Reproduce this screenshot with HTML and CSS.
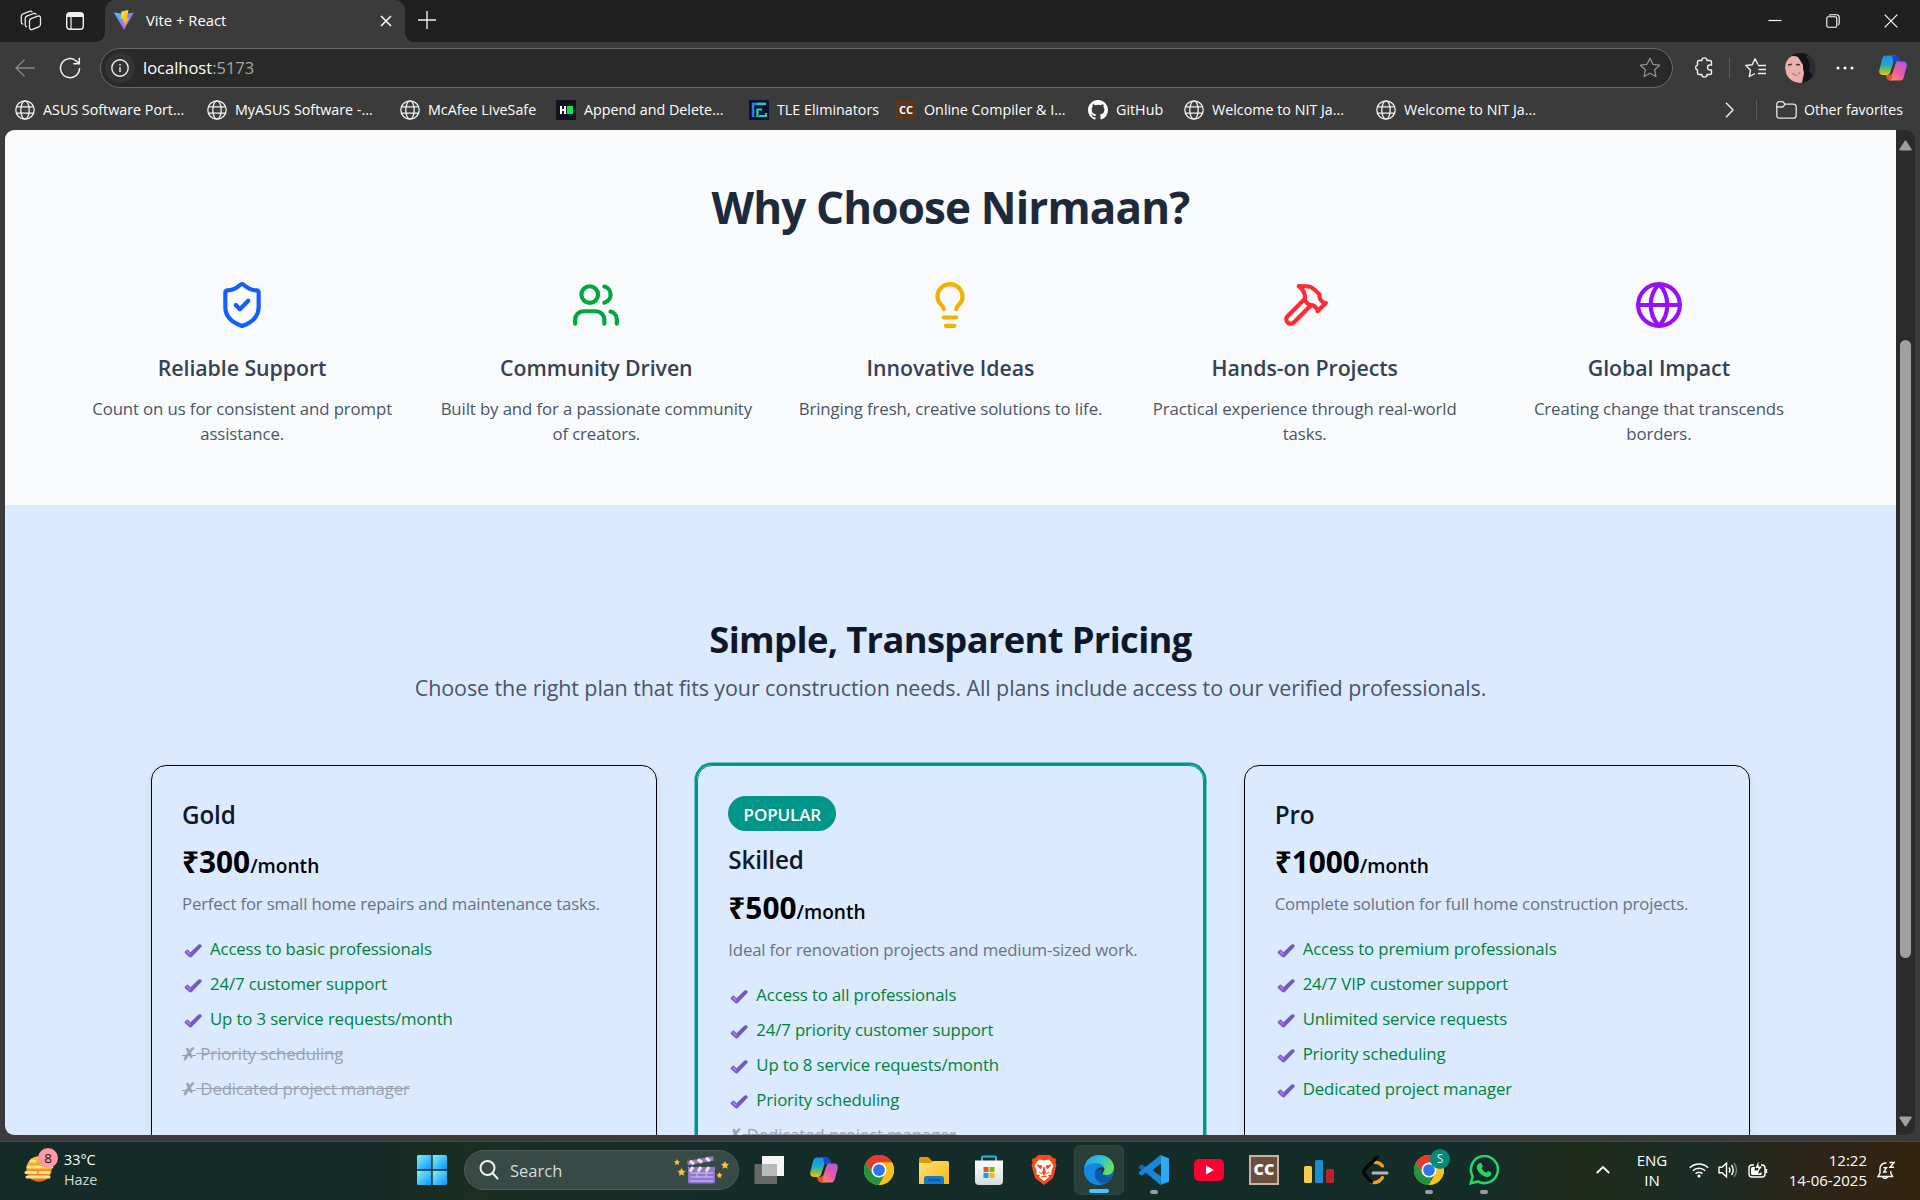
FILE: index.html
```html
<!DOCTYPE html>
<html lang="en">
<head>
<meta charset="utf-8">
<title>Vite + React</title>
<link rel="stylesheet" href="styles.css">
</head>
<body>
<svg class="defs" width="0" height="0" aria-hidden="true">
  <defs>
    <linearGradient id="gVite" x1="0" y1="0" x2="1" y2="1"><stop offset="0" stop-color="#41d1ff"/><stop offset="1" stop-color="#bd34fe"/></linearGradient>
    <linearGradient id="gBolt" x1="0" y1="0" x2="0" y2="1"><stop offset="0" stop-color="#ffdd35"/><stop offset="1" stop-color="#ffa800"/></linearGradient>
    <linearGradient id="gCoA" x1="0" y1="0" x2="0" y2="1"><stop offset="0" stop-color="#1b8ff0"/><stop offset=".45" stop-color="#22a8c8"/><stop offset=".75" stop-color="#7cc04a"/><stop offset="1" stop-color="#f4c01c"/></linearGradient>
    <linearGradient id="gCoB" x1="1" y1="0" x2="0" y2="1"><stop offset="0" stop-color="#a259f2"/><stop offset=".5" stop-color="#ee5a9a"/><stop offset="1" stop-color="#ffa04a"/></linearGradient>
    <linearGradient id="gWin" x1="0" y1="0" x2="1" y2="1"><stop offset="0" stop-color="#7df3ff"/><stop offset="1" stop-color="#0a93f5"/></linearGradient>
    <linearGradient id="gFold" x1="0" y1="0" x2="1" y2="1"><stop offset="0" stop-color="#ffe07a"/><stop offset="1" stop-color="#f8b912"/></linearGradient>
    <linearGradient id="gEdge" x1="0" y1="0" x2="1" y2=".4"><stop offset="0" stop-color="#1f9de0"/><stop offset=".55" stop-color="#2fc0d4"/><stop offset="1" stop-color="#66e05a"/></linearGradient>
    <linearGradient id="gSun" x1="0" y1="0" x2="0" y2="1"><stop offset="0" stop-color="#fccb1a"/><stop offset="1" stop-color="#e9650c"/></linearGradient>
    <linearGradient id="gTick" x1="0" y1="0" x2="0" y2="1"><stop offset="0" stop-color="#6460a8"/><stop offset="1" stop-color="#8a4fdc"/></linearGradient>
    <linearGradient id="gStore" x1="0" y1="0" x2="0" y2="1"><stop offset="0" stop-color="#fdfdfd"/><stop offset="1" stop-color="#d9dadd"/></linearGradient>
    <symbol id="world" viewBox="0 0 20 20"><g fill="none" stroke="#f2f2f2" stroke-width="1.3"><circle cx="10" cy="10" r="9.2"/><ellipse cx="10" cy="10" rx="4.2" ry="9.2"/><path d="M1.6 6.8h16.8M1.6 13.2h16.8"/></g></symbol>
    <symbol id="copilot" viewBox="0 0 30 30">
      <path d="M8 2.500h9.500c2 0 3 1.300 3.500 3l.9 3h-4c-1.800 0-2.700 1-3.200 2.800l-2.600 8.200C11.500 21.200 10.500 22 8.500 22H5C2 22 .6 20 1.400 16.800L4 6.500C4.700 3.800 5.700 2.500 8 2.500z" fill="url(#gCoA)"/>
      <path d="M14 2.500h3.500c2 0 3 1.300 3.500 3l.9 3h-4.400L15.500 10z" fill="#1646cc"/>
      <path d="M22 27.500H12.500c-2 0-3-1.300-3.500-3L8.100 22h3.400c1.800 0 2.700-1 3.200-2.800l2.700-8C18.100 9 19 8.500 21 8.500h4c3 0 4.400 2 3.600 5.200L26 23.500c-.6 2.700-1.700 4-4 4z" fill="url(#gCoB)"/>
      <path d="M8.100 22h3.400c1.500 0 2.500-.8 3-2l-1 7.500h-1c-2 0-3-1.300-3.500-3z" fill="#ee4a2c"/>
    </symbol>
    <symbol id="chrome" viewBox="0 0 48 48">
      <circle cx="24" cy="24" r="24" fill="#fbc11a"/>
      <path d="M24 12h20.800A24 24 0 0 0 3.200 12L13.600 30z" fill="#e23a2e"/>
      <path d="M3.200 12A24 24 0 0 0 24 48l10.400-18-10.400 4-10.400-4z" fill="#229342"/>
      <path d="M24 48A24 24 0 0 0 44.800 12H24l10.400 18z" fill="#fbc11a"/>
      <circle cx="24" cy="24" r="12" fill="#fff"/><circle cx="24" cy="24" r="9.400" fill="#2a78ea"/>
    </symbol>
    <symbol id="tick" viewBox="0 0 18 16"><path d="M.9 8.600 2.600 6.900Q3.500 6.300 4.300 7L6.500 9.300 14.300 1.700Q15.200.9 16.300 1.300L17.600 2.300Q18 3.200 17.300 4L8 13.800Q6.500 15.200 5 13.700L1.100 10.300Q.3 9.400.9 8.600z" fill="url(#gTick)"/><path d="M2.700 8.300 6.300 11.600" stroke="#a48be8" stroke-width="1.500"/></symbol>
  </defs>
</svg>

<header class="tabstrip">
  <svg class="workspaces" width="22" height="22" viewBox="0 0 22 22" fill="none" stroke="#e8e8e8" stroke-width="1.300" stroke-linejoin="round" stroke-linecap="round"><path d="M9.500 10.800q.2-1.600 1.600-2.200l6.600-2.500q2.500-.7 2.800 1.700v6.500q-.1 1.800-1.700 2.500l-6.300 2.600q-2.600.8-3-1.700z"/><path d="M6.500 16.800Q5 16.200 5.200 14.500V8.500Q5.300 6.800 6.800 6.200L13.500 3.500q1.800-.5 2.500.6"/><path d="M2.700 14.200Q1.200 13.600 1.300 12V6.200Q1.400 4.500 3 3.800L9.500 1.300q1.800-.5 2.500.6"/></svg>
  <svg class="tabmenu" width="18" height="18" viewBox="0 0 18 18"><rect x=".7" y=".7" width="16.600" height="16.600" rx="3" fill="none" stroke="#f0f0f0" stroke-width="1.400"/><path d="M1 2.500Q1 1 3 1h12q2 0 2 2v2H1z" fill="#f0f0f0"/><path d="M5 5v12" stroke="#f0f0f0" stroke-width="1.200"/></svg>
  <div class="tab">
    <svg width="20" height="20" viewBox="0 0 20 20"><path d="M0 2.500 10 20 20 2.500 10.500 4z" fill="url(#gVite)"/><path d="M14.500 0 7.300 1.400 6.800 9.300 9.300 8.800 8.700 12.500 10.600 12 10 17.500 15.200 8 12.700 8.500z" fill="url(#gBolt)"/></svg>
    <span>Vite + React</span>
    <svg class="tab-close" width="12" height="12" viewBox="0 0 12 12" stroke="#fff" stroke-width="1.500"><path d="m1 1 10 10M11 1 1 11"/></svg>
  </div>
  <svg class="newtab" width="18" height="18" viewBox="0 0 18 18" stroke="#f0f0f0" stroke-width="1.400"><path d="M9 0v18M0 9h18"/></svg>
  <div class="window-buttons">
    <svg width="14" height="14" viewBox="0 0 14 14" stroke="#fff" stroke-width="1.200"><path d="M.5 6.500h13"/></svg>
    <svg width="14" height="14" viewBox="0 0 14 14" fill="none" stroke="#fff" stroke-width="1.100"><rect x=".8" y="2.800" width="10" height="10.400" rx="1.500"/><path d="M3 1.400Q3.500.7 5 .7h5.500q2.700 0 2.700 2.700V9q0 1.500-1 2"/></svg>
    <svg width="14" height="14" viewBox="0 0 14 14" stroke="#fff" stroke-width="1.200"><path d="m.7.700 12.600 12.600M13.300.7.700 13.300"/></svg>
  </div>
</header>

<div class="toolbar">
  <svg width="20" height="18" viewBox="0 0 20 18" fill="none" stroke="#868686" stroke-width="1.300"><path d="M20 9H1M9.500.7 1 9l8.500 8.300"/></svg>
  <svg class="reload" width="22" height="22" viewBox="0 0 22 22" fill="none" stroke="#f2f2f2" stroke-width="1.500"><path d="M20.500 11A9.500 9.500 0 1 1 17.500 4.200L20 6.500"/><path d="M20.300.8v6h-6"/></svg>
  <div class="address">
    <span class="site-info"><svg width="18" height="18" viewBox="0 0 18 18" fill="none" stroke="#f0f0f0" stroke-width="1.400"><circle cx="9" cy="9" r="8.200"/><path d="M9 8v5M9 5v1.600"/></svg></span>
    <span class="url">localhost<span class="port">:5173</span></span>
    <svg class="fav" width="22" height="21" viewBox="0 0 22 21" fill="none" stroke="#929292" stroke-width="1.300" stroke-linejoin="round"><path d="m11 1.200 2.900 6.100 6.700.9-4.900 4.600 1.200 6.700-5.900-3.200-5.900 3.200 1.200-6.700L1.400 8.200l6.700-.9z"/></svg>
  </div>
  <svg class="ext" width="20" height="21" viewBox="0 0 20 21" fill="none" stroke="#f0f0f0" stroke-width="1.400" stroke-linejoin="round"><path d="M5 3.500h2.800a2.600 2.600 0 0 1 5.200 0h3q1.500 0 1.500 1.500v3h-1.500a2.500 2.500 0 0 0 0 5h1.500v3q0 1.500-1.500 1.500h-3a2.600 2.600 0 0 1-5.200 0H5q-1.500 0-1.500-1.500v-3a2.600 2.600 0 0 1 0-5V5Q3.500 3.500 5 3.500z"/></svg>
  <i class="sep"></i>
  <svg class="favs" width="21" height="20" viewBox="0 0 21 20" fill="none" stroke="#f0f0f0" stroke-width="1.400" stroke-linejoin="round"><path d="M13 6.500 10 .8 7.200 6.700.8 7.500l4.700 4.500-1.200 6.500L10 15.500M13 7.500h8M13.500 11.500H21M13 15.500h8"/></svg>
  <svg class="avatar" width="30" height="30" viewBox="0 0 30 30"><defs><clipPath id="cAv"><circle cx="15" cy="15" r="15"/></clipPath></defs><g clip-path="url(#cAv)"><rect width="30" height="30" fill="#17141a"/><path d="M0 8Q6 1 13 4l5 8 1 8-2 10H9Q0 26 0 14z" fill="#eab0ae"/><path d="M13 0Q20 6 18 14l2 12 10 2V0z" fill="#15131a"/><path d="M21 3q6 8 3 15l6 8V2z" fill="#2c2c33"/><path d="M3 12l4-.8M11 11.500l4 .3" stroke="#51353a" stroke-width="1.400"/><path d="M7 20.500q4 2.500 8-1-2 6-8 1z" fill="#fff" stroke="#c8636c" stroke-width=".8"/></g></svg>
  <svg class="more" width="18" height="4" viewBox="0 0 18 4" fill="#fff"><circle cx="2" cy="2" r="1.500"/><circle cx="9" cy="2" r="1.500"/><circle cx="16" cy="2" r="1.500"/></svg>
  <svg class="side-copilot" width="30" height="30"><use href="#copilot"/></svg>
</div>

<nav class="bookmarks">
  <a><svg width="20" height="20"><use href="#world"/></svg>ASUS Software Port...</a>
  <a><svg width="20" height="20"><use href="#world"/></svg>MyASUS Software -...</a>
  <a><svg width="20" height="20"><use href="#world"/></svg>McAfee LiveSafe</a>
  <a><svg width="20" height="20" viewBox="0 0 20 20"><rect width="20" height="20" fill="#0e141e"/><path d="M4 6h2v3h2V6h2v8H8v-3H6v3H4z" fill="#fff"/><path d="M11 6h6v8h-6z" fill="#05e560"/></svg>Append and Delete...</a>
  <a><svg width="20" height="20" viewBox="0 0 20 20"><rect width="20" height="20" rx="1" fill="#0a1038"/><path d="M4 17V4h13" fill="none" stroke="#1c86f2" stroke-width="2.400"/><path d="M8 3.800h9M8.500 17V9.500H13M10 16h7v-3" fill="none" stroke="#14dca8" stroke-width="2.200"/></svg>TLE Eliminators</a>
  <a><span class="cc-mini">CC</span>Online Compiler &amp; I...</a>
  <a><svg width="20" height="20" viewBox="0 0 16 16" fill="#fff"><path d="M8 0C3.580 0 0 3.580 0 8c0 3.540 2.290 6.530 5.470 7.590.4.070.55-.17.55-.38v-1.340c-2.230.48-2.690-1.070-2.690-1.070-.36-.92-.89-1.170-.89-1.170-.73-.5.050-.49.050-.49.800.060 1.230.820 1.230.820.710 1.220 1.870.870 2.330.660.070-.520.280-.870.510-1.070-1.780-.2-3.640-.890-3.640-3.950 0-.870.310-1.590.820-2.150-.080-.2-.360-1.020.080-2.120 0 0 .670-.21 2.200.820a7.600 7.600 0 0 1 4 0c1.530-1.040 2.200-.820 2.200-.820.440 1.100.160 1.920.080 2.120.510.560.820 1.270.820 2.150 0 3.070-1.870 3.750-3.650 3.950.290.250.540.730.540 1.480v2.190c0 .210.150.460.550.380A8 8 0 0 0 16 8c0-4.420-3.580-8-8-8z"/></svg>GitHub</a>
  <a><svg width="20" height="20"><use href="#world"/></svg>Welcome to NIT Ja...</a>
  <a><svg width="20" height="20"><use href="#world"/></svg>Welcome to NIT Ja...</a>
  <div class="other">
    <svg width="9" height="16" viewBox="0 0 9 16" fill="none" stroke="#f0f0f0" stroke-width="1.400"><path d="m1 .7 7 7.300-7 7.300"/></svg>
    <i class="sep"></i>
    <svg width="21" height="18" viewBox="0 0 21 18" fill="none" stroke="#e6e6e6" stroke-width="1.300"><path d="M.8 3.500Q.8.7 3.500.7h3.200l2.500 2.500h8q3 0 3 3v8q0 3-3 3H3.800q-3 0-3-3zM.8 6h6l2.400-2.800"/></svg>
    <span>Other favorites</span>
  </div>
</nav>

<div class="viewport">
  <main class="page">
    <section class="why">
      <h2>Why Choose Nirmaan?</h2>
      <div class="features">
        <article><svg class="blue" viewBox="0 0 24 24"><path d="M20 13c0 5-3.500 7.500-7.660 8.950a1 1 0 0 1-.67-.01C7.500 20.500 4 18 4 13V6a1 1 0 0 1 1-1c2 0 4.500-1.200 6.240-2.720a1.170 1.170 0 0 1 1.520 0C14.510 3.810 17 5 19 5a1 1 0 0 1 1 1z"/><path d="m9 12 2 2 4-4"/></svg><h3>Reliable Support</h3><p>Count on us for consistent and prompt assistance.</p></article>
        <article><svg class="green" viewBox="0 0 24 24"><path d="M16 21v-2a4 4 0 0 0-4-4H6a4 4 0 0 0-4 4v2"/><path d="M16 3.128a4 4 0 0 1 0 7.744"/><path d="M22 21v-2a4 4 0 0 0-3-3.870"/><circle cx="9" cy="7" r="4"/></svg><h3>Community Driven</h3><p>Built by and for a passionate community of creators.</p></article>
        <article><svg class="yellow" viewBox="0 0 24 24"><path d="M15 14c.2-1 .7-1.700 1.500-2.500 1-.9 1.500-2.200 1.500-3.500A6 6 0 0 0 6 8c0 1 .2 2.200 1.500 3.500.7.700 1.300 1.500 1.500 2.500"/><path d="M9 18h6"/><path d="M10 22h4"/></svg><h3>Innovative Ideas</h3><p>Bringing fresh, creative solutions to life.</p></article>
        <article><svg class="red" viewBox="0 0 24 24"><path d="m15 12-8.373 8.373a1 1 0 1 1-3-3L12 9"/><path d="m18 15 4-4"/><path d="m21.500 11.500-1.914-1.914A2 2 0 0 1 19 8.172V7l-2.260-2.260a6 6 0 0 0-4.202-1.756L9 2.960l.92.820A6.180 6.180 0 0 1 12 8.400V10l2 2h1.172a2 2 0 0 1 1.414.586L18.500 14.500"/></svg><h3>Hands-on Projects</h3><p>Practical experience through real-world tasks.</p></article>
        <article><svg class="purple" viewBox="0 0 24 24"><circle cx="12" cy="12" r="10"/><path d="M12 2a14.500 14.500 0 0 0 0 20 14.500 14.500 0 0 0 0-20"/><path d="M2 12h20"/></svg><h3>Global Impact</h3><p>Creating change that transcends borders.</p></article>
      </div>
    </section>
    <section class="pricing">
      <h2>Simple, Transparent Pricing</h2>
      <p class="lead">Choose the right plan that fits your construction needs. All plans include access to our verified professionals.</p>
      <div class="plans">
        <article class="plan">
          <h3>Gold</h3>
          <p class="price">₹300<span>/month</span></p>
          <p class="about">Perfect for small home repairs and maintenance tasks.</p>
          <ul>
            <li><svg><use href="#tick"/></svg>Access to basic professionals</li>
            <li><svg><use href="#tick"/></svg>24/7 customer support</li>
            <li><svg><use href="#tick"/></svg>Up to 3 service requests/month</li>
            <li class="off"><b>✗</b> Priority scheduling</li>
            <li class="off"><b>✗</b> Dedicated project manager</li>
          </ul>
        </article>
        <article class="plan popular">
          <span class="badge">POPULAR</span>
          <h3>Skilled</h3>
          <p class="price">₹500<span>/month</span></p>
          <p class="about">Ideal for renovation projects and medium-sized work.</p>
          <ul>
            <li><svg><use href="#tick"/></svg>Access to all professionals</li>
            <li><svg><use href="#tick"/></svg>24/7 priority customer support</li>
            <li><svg><use href="#tick"/></svg>Up to 8 service requests/month</li>
            <li><svg><use href="#tick"/></svg>Priority scheduling</li>
            <li class="off"><b>✗</b> Dedicated project manager</li>
          </ul>
        </article>
        <article class="plan">
          <h3>Pro</h3>
          <p class="price">₹1000<span>/month</span></p>
          <p class="about">Complete solution for full home construction projects.</p>
          <ul>
            <li><svg><use href="#tick"/></svg>Access to premium professionals</li>
            <li><svg><use href="#tick"/></svg>24/7 VIP customer support</li>
            <li><svg><use href="#tick"/></svg>Unlimited service requests</li>
            <li><svg><use href="#tick"/></svg>Priority scheduling</li>
            <li><svg><use href="#tick"/></svg>Dedicated project manager</li>
          </ul>
        </article>
      </div>
    </section>
  </main>
  <div class="scrollbar">
    <svg width="13" height="11" viewBox="0 0 13 11"><path d="M5.500 1.200q1-1.500 2 0L12.500 9q.5 1.500-1 1.500h-10Q0 10.500.5 9z" fill="#9f9f9f"/></svg>
    <i class="thumb"></i>
    <svg width="13" height="11" viewBox="0 0 13 11"><path d="M5.500 9.800q1 1.500 2 0L12.500 2q.5-1.500-1-1.500h-10Q0 .5.500 2z" fill="#9f9f9f"/></svg>
  </div>
</div>

<footer class="taskbar">
  <div class="weather">
    <svg width="36" height="40" viewBox="0 0 36 40"><circle cx="15" cy="22" r="12.700" fill="url(#gSun)"/><g stroke="#f7dfa0" stroke-width="3" stroke-linecap="round"><path d="M7 14h4M4 20h13M20 20h8M2 25.500h10M16 25.500h9M3 30h22"/></g><circle cx="24" cy="11" r="10" fill="#ff99a4"/><text x="24" y="15.500" text-anchor="middle" font-size="13.500" fill="#241416">8</text></svg>
    <div><p>33°C</p><p class="dim">Haze</p></div>
  </div>
  <div class="apps">
    <svg class="start" width="30" height="30" viewBox="0 0 30 30" fill="url(#gWin)"><path d="M1.500 0H14.300v14.300H0V1.500Q0 0 1.500 0z"/><path d="M15.700 0H28.500Q30 0 30 1.500v12.800H15.700z"/><path d="M0 15.700h14.300V30H1.500Q0 30 0 28.500z"/><path d="M15.700 15.700H30v12.800q0 1.500-1.500 1.500H15.700z"/></svg>
    <div class="search">
      <svg width="20" height="20" viewBox="0 0 20 20" fill="none" stroke="#f0f2f1" stroke-width="2"><circle cx="8.500" cy="8" r="7"/><path d="m13.500 13 5 5.500" stroke-linecap="round"/></svg>
      <span>Search</span>
      <svg class="clapper" width="56" height="30" viewBox="0 0 56 30"><path d="M15 13h27v14q0 1.500-1.500 1.500h-24Q15 28.500 15 27z" fill="#9177d0"/><path d="M17 18h23M17 22h23M17 26h23M24 17v5M33 17v5" stroke="#d3c5f4" stroke-width="1"/><path d="m14 6 26-5 1 4.500-26 5zM15 12h27v4.500H15z" fill="#8f79c9"/><path d="m17 6 4 3M25 4.500l4 3M33 3l4 3M20 12l-3 4.500M28 12l-3 4.500M36 12l-3 4.500" stroke="#fbe6de" stroke-width="3"/><g fill="#f3bf3c"><path d="m4 4 1 2 2 .4-1.500 1.500.3 2.100L4 9l-1.800 1 .3-2.100L1 6.400 3 6z"/><path d="m8.500 13 1.300 2.500 2.700.5-2 2 .5 2.800-2.500-1.300L6 20.800l.5-2.800-2-2 2.700-.5z"/><path d="m52 6 1.300 2.500 2.700.5-2 2 .5 2.800L52 12.500l-2.500 1.300L50 11l-2-2 2.700-.5z"/><path d="m46.500 17 1 2 2 .4-1.500 1.500.3 2.100-1.800-1-1.800 1 .3-2.100-1.500-1.500 2-.4z"/></g></svg>
    </div>
    <span class="app"><svg viewBox="0 0 30 30"><path d="M8 1h22v20H8z" fill="#f4f4f4"/><path d="M1.500 9H23v20H.500V10z" fill="#666968"/><path d="M8 9h15v12H8z" fill="#b9bbba"/></svg></span>
    <span class="app"><svg><use href="#copilot"/></svg></span>
    <span class="app"><svg><use href="#chrome"/></svg></span>
    <span class="app"><svg viewBox="0 0 30 30"><path d="M0 4q0-2 2-2h7l4 4v4H0z" fill="#dc9b07"/><path d="M0 8h11l3-2h14.500Q30 6 30 7.500V29H0z" fill="url(#gFold)"/><path d="M5 29v-5.500Q5 21 7.500 21h15q2.500 0 2.500 2.500V29z" fill="#1279cf"/><path d="M9 25h12" stroke="#0b4f91" stroke-width="1.200"/></svg></span>
    <span class="app"><svg viewBox="0 0 30 30"><path d="M8 6V2.500Q8 1.500 9 1.500h12q1 0 1 1V6" fill="none" stroke="#29b5ea" stroke-width="2"/><path d="M1 5.500h28V26q0 4-4 4H5q-4 0-4-4z" fill="url(#gStore)"/><path d="M9.500 12h5v5h-5z" fill="#f25022"/><path d="M15.500 12h5v5h-5z" fill="#7fba00"/><path d="M9.500 18h5v5h-5z" fill="#00a4ef"/><path d="M15.500 18h5v5h-5z" fill="#ffb900"/></svg></span>
    <span class="app"><svg viewBox="0 0 30 30"><path d="M9 0h12l3 3 3 1-.500 4 1 2-3.500 13-9 7-9-7L2.500 10l1-2L3 4l3-1z" fill="#fb4a18"/><path d="M10 4.500 15 5.500l5-1 4.500 6-2.500 6.500 1 2-4 1 1 2-5 4-5-4 1-2-4-1 1-2L5.500 10.500z" fill="#fff"/><path d="m8 10 5 1-1.500 3zM22 10l-5 1 1.500 3zM15 12l1.500 6L15 20l-1.500-2zM10 17l3 2M20 17l-3 2M12 22l3-1 3 1" fill="#fb4a18" stroke="#fb4a18" stroke-width="1"/></svg></span>
    <span class="app active"><svg viewBox="0 0 30 30"><circle cx="15" cy="15" r="15" fill="#1467b8"/><path d="M0 14C1 5 7 0 15 0c9 0 15 6 15 12.500 0 5-3.500 7.500-7.500 7.500-3 0-4-1-4-2 0-.8 1.500-1.500 1.500-4 0-3-3-5.500-7.500-5.500C7 8.500 1.500 10 0 14z" fill="url(#gEdge)"/><path d="M0 15c.5-4 5-6.500 10-6.500 4.500 0 8 2 8.500 4.500-2-1.500-8-.5-8 6 0 5 4 9.500 8 10.500-1.500.5-2.500.5-3.500.5C6.500 30 0 23.500 0 15z" fill="#1788de"/><path d="M20.500 13.500Q19 11.500 16 12.500c-3 1-4.500 3.500-4.200 6.500.5 5.500 6 8.500 10 7.500 3-.7 4.500-2 6-4-3 .8-7 .5-9-2-1-1.500-.3-2.300.3-3.200.8-1.200 1.400-2.300 1.400-3.800z" fill="#1a3e50"/><path d="M11.500 19c0 6 6 8.800 10 7.800 3-.7 5-2.300 6.500-4.300.5-.7 0-1.300-.8-.9-4.700 2-9.700.9-9.700-4.100 0-2 .5-3 .5-3-4 0-6.500 2-6.500 4.500z" fill="#0c59a8"/></svg></span>
    <span class="app open"><svg viewBox="0 0 30 30"><path d="M21.500 0 7.500 13 3 9.500 0 11v2l18 14 3.500 3 1-8z" fill="#0b6cb8"/><path d="M21.500 30 7.500 17 3 20.500 0 19v-2L18 3l3.500-3 1 8z" fill="#1a86d6"/><path d="M22 8.500 13.500 15l8.500 6.500z" fill="#18302e"/><path d="M21.500 0 30 3.500v23L21.500 30q1.500-1 .5-3V3q.5-2-.5-3z" fill="#2cabf4"/></svg></span>
    <span class="app"><svg viewBox="0 0 30 30"><rect y="4" width="30" height="22" rx="5" fill="#ff0033"/><path d="m12 10.500 8 4.500-8 4.500z" fill="#fff"/></svg></span>
    <span class="app"><span class="cc">CC</span></span>
    <span class="app"><svg viewBox="0 0 30 30"><rect y="11" width="8" height="17" rx="1.500" fill="#f6cb4e"/><rect x="11" y="5" width="8" height="23" rx="1.500" fill="#1d8fce"/><rect x="22" y="14" width="8" height="14" rx="1.500" fill="#b8252c"/></svg></span>
    <span class="app"><svg viewBox="0 0 30 30" fill="none" stroke-linecap="round"><path d="M16 7.500q4-.5 7.500 3.500M23.500 22.500q-4 6-11 5" stroke="#f9a01b" stroke-width="3.200"/><path d="M18.500 2 6 14Q3.500 17 6 20l6.500 7" stroke="#070707" stroke-width="3.400"/><path d="M14 18h14" stroke="#b7b7b7" stroke-width="3"/></svg></span>
    <span class="app open"><svg><use href="#chrome"/></svg><i class="profile">S</i></span>
    <span class="app open"><svg viewBox="0 0 30 30"><path d="M1.800 28.300 3.700 21.300A13.500 13.500 0 1 1 8.900 26.400z" fill="#132b28" stroke="#25d366" stroke-width="2.600"/><path d="M10.500 8q1-.6 1.800 0l1.500 3.300-1.300 2q1.700 3 4.700 4.500l1.900-1.800 3.200 1.600q.8 2-2 4-2.500 1.200-6.500-1.100-4.500-2.700-6-7Q7.300 10 10.500 8z" fill="#25d366"/></svg></span>
  </div>
  <div class="tray">
    <svg width="14" height="8" viewBox="0 0 14 8" fill="none" stroke="#fff" stroke-width="1.800"><path d="m.8 7 6.200-6 6.200 6"/></svg>
    <div class="lang"><p>ENG</p><p>IN</p></div>
    <svg class="wifi" width="20" height="16" viewBox="0 0 20 16" fill="none" stroke="#fff" stroke-width="1.500"><path d="M.8 5.800a13 13 0 0 1 18.400 0M3.800 8.800a8.800 8.800 0 0 1 12.400 0M6.600 11.600a4.800 4.800 0 0 1 6.800 0"/><circle cx="10" cy="14" r="1.600" fill="#fff" stroke="none"/></svg>
    <svg class="volume" width="20" height="18" viewBox="0 0 20 18" fill="none" stroke="#fff" stroke-width="1.400"><path d="M1 6.200h3L8.500 2v14L4 11.800H1z"/><path d="M11 6.500q2 2.500 0 5M13.500 4q3.500 5 0 10"/><path d="M16 2q5 7 0 14" stroke="#77807a"/></svg>
    <svg class="battery" width="20" height="18" viewBox="0 0 20 18" fill="none" stroke="#fff" stroke-width="1.400"><path d="M6 4H4Q1 4 1 7v6q0 3 3 3h10q3 0 3-3V7q0-3-3-3h-1M18.500 8v4"/><path d="M3 7.500q0-1.500 1.500-1.500H7l-.5 3.500h4V13l3-2v3H4.500Q3 14 3 12.500z" fill="#fff" stroke="none"/><path d="M10.500.5 7.500 7h3l-1 4.500L14 5.500h-3.500z" fill="#fff" stroke="none"/></svg>
    <div class="clock"><p>12:22</p><p>14-06-2025</p></div>
    <svg class="bell" width="18" height="19" viewBox="0 0 18 19" fill="none" stroke="#fff" stroke-width="1.400"><path d="M9.500 2H8Q3 3 3 8v4L1 15.500h14.500L13.800 12v-2M5.800 16q2 3 4.800 0"/><path d="M6.500 6.800h3L6.700 11h3.100M12.500 1.500H17l-4 4.800h4"/></svg>
  </div>
</footer>
</body>
</html>
```
FILE: styles.css
```css
* { box-sizing: border-box; margin: 0; padding: 0; }
body {
  width: 1920px; height: 1200px; overflow: hidden;
  display: flex; flex-direction: column;
  background: #3b3b3b; color: #fff;
  font-family: "Open Sans", "Noto Sans", sans-serif;
}
svg { display: block; flex: none; }
.defs { position: absolute; }
ul { list-style: none; }

/* Browser chrome */
.tabstrip { height: 42px; flex: none; background: #202020; display: flex; align-items: center; padding-left: 20px; }
.workspaces { margin-bottom: 1px; }
.tabmenu { margin-left: 24px; margin-bottom: 1px; }
.tab {
  align-self: stretch; width: 300px; margin-left: 21px; padding: 0 13px 3px 9px; position: relative;
  display: flex; align-items: center; gap: 12px;
  background: #3b3b3b; border-radius: 10px 10px 0 0; font-size: 14.8px;
}
.tab::before, .tab::after { content: ""; position: absolute; bottom: 0; width: 9px; height: 9px; }
.tab::before { left: -9px; background: radial-gradient(circle at 0 0, #202020 8.5px, #3b3b3b 9px); }
.tab::after { right: -9px; background: radial-gradient(circle at 100% 0, #202020 8.5px, #3b3b3b 9px); }
.tab-close { margin-left: auto; margin-top: 2px; }
.newtab { margin: 0 0 3px 13px; }
.window-buttons { margin-left: auto; display: flex; gap: 44px; padding-right: 22px; }

.toolbar { height: 51px; flex: none; display: flex; align-items: center; padding-left: 15px; }
.reload { margin-left: 24px; }
.address {
  width: 1573px; height: 40px; margin-left: 19px; padding: 0 11px 0 4px;
  display: flex; align-items: center;
  background: #292929; border: 1px solid #6a6a6a; border-radius: 20px; font-size: 16.5px;
}
.site-info { width: 30px; height: 30px; border-radius: 15px; background: #343434; display: grid; place-items: center; }
.url { margin: 0 0 1px 8px; }
.port { color: #a5a5a5; }
.fav { margin-left: auto; }
.ext { margin-left: 21px; }
.sep { width: 1px; height: 20px; background: #5c5c5c; }
.toolbar .sep { margin-left: 15px; }
.favs { margin-left: 15px; }
.avatar { margin-left: 19px; }
.more { margin-left: 21px; }
.side-copilot { margin-left: 24px; }

.bookmarks {
  height: 37px; flex: none; padding: 0 17px 4px 15px; font-size: 14.3px;
  display: grid; align-items: center;
  grid-template-columns: 192px 193px 156px 193px 147px 192px 96px 192px 192px 1fr;
}
.bookmarks a { display: flex; align-items: center; gap: 8px; white-space: nowrap; }
.cc-mini { width: 20px; height: 20px; background: #583620; font-size: 11px; font-weight: 700; line-height: 20px; text-align: center; }
.other { display: flex; align-items: center; justify-content: flex-end; }
.other .sep { margin: 0 19px 0 22px; }
.other span { margin-left: 7px; white-space: nowrap; font-size: 14.1px; }

/* Page viewport */
.viewport { height: 1005px; flex: none; margin: 0 5px; display: flex; overflow: hidden; border-radius: 9px; background: #2b2b2b; }
.page { width: 1891px; flex: none; overflow: hidden; }
.scrollbar { flex: 1; display: flex; flex-direction: column; align-items: center; padding: 10px 0 8px; }
.thumb { width: 11px; height: 618px; margin: 189px 0 auto; border-radius: 6px; background: #9f9f9f; }

.why { height: 375px; padding: 52px 80px 0; background: #f9fafb; text-align: center; }
.why h2 { font-size: 44px; line-height: 50px; letter-spacing: -.85px; color: #1e2939; font-weight: 700; }
.features { margin-top: 48px; display: grid; grid-template-columns: repeat(5, 1fr); gap: 40px; }
.features article { display: flex; flex-direction: column; align-items: center; }
.features svg { width: 50px; height: 50px; fill: none; stroke-width: 2; stroke-linecap: round; stroke-linejoin: round; }
.features h3 { margin-top: 20px; font-size: 21.3px; line-height: 35px; letter-spacing: -.05px; font-weight: 600; color: #364153; }
.features p { margin-top: 11px; font-size: 16.8px; letter-spacing: -.11px; line-height: 25px; color: #4a5565; }
.blue { stroke: #155dfc; }
.green { stroke: #00a63e; }
.yellow { stroke: #f0b100; }
.red { stroke: #fb2c36; }
.purple { stroke: #9810fa; }

.pricing { height: 900px; background: #dbeafe; padding: 112px 146px 0; text-align: center; }
.pricing h2 { font-size: 36.3px; line-height: 45px; letter-spacing: -.64px; font-weight: 700; color: #101828; }
.lead { margin-top: 8px; font-size: 21.5px; letter-spacing: -.1px; line-height: 35px; color: #4a5565; white-space: nowrap; }
.plans { margin-top: 60px; display: grid; grid-template-columns: repeat(3, 1fr); gap: 40px; text-align: left; }
.plan { height: 500px; padding: 30px; border: 1px solid #000; border-radius: 15px; box-shadow: 0 4px 10px rgba(0, 0, 0, .08); }
.popular { border-color: #009689; box-shadow: 0 0 0 2.5px #009689; }
.badge { display: block; width: 108px; height: 35px; border-radius: 18px; background: #009689; font-size: 17px; letter-spacing: -.1px; font-weight: 600; line-height: 37px; text-align: center; margin-bottom: 11px; }
.plan h3 { margin-top: 1px; font-size: 24.3px; letter-spacing: -.2px; line-height: 35px; font-weight: 600; color: #101828; }
.badge + h3 { margin-top: 0; padding-top: 0; }
.popular .badge { margin-bottom: 11px; }
.popular h3 { margin-top: 0; }
.popular .price { margin-top: 11px; }
.price { margin-top: 10px; font-size: 29.8px; line-height: 40px; font-weight: 700; color: #000; }
.price span { font-size: 19.1px; font-weight: 600; }
.about { margin-top: 5px; font-size: 16.8px; letter-spacing: -.17px; line-height: 25px; color: #6a7282; white-space: nowrap; }
.plan ul { margin-top: 20px; display: grid; gap: 10px; }
.plan li { display: flex; align-items: center; height: 25px; font-size: 16.8px; letter-spacing: -.13px; line-height: 25px; color: #008236; white-space: nowrap; }
.plan li svg { width: 18px; height: 16px; margin: 5px 8px 0 2px; }
.plan .off { display: block; color: #99a1af; text-decoration: line-through; }
.off b { font-family: "DejaVu Sans", sans-serif; font-weight: 700; font-size: 17px; -webkit-text-stroke: .5px #99a1af; }

/* Windows taskbar */
.taskbar {
  height: 59px; margin-top: 6px; padding-bottom: 2px; flex: none; display: flex; border-top: 1px solid #3f4d47;
  background: linear-gradient(90deg, #142b28 0, #152b28 360px, #1b2e22 470px, #152d29 700px, #152d29 1480px, #202b1a 1580px, #1b2d27 1700px, #2b2519 1790px, #35240f 1920px);
}
.weather { width: 417px; display: flex; align-items: center; padding-left: 24px; font-size: 14.4px; line-height: 20px; }
.weather div { margin-left: 4px; }
.weather svg { margin-top: -6px; }
.weather .dim { color: #d3d9d7; }
.apps { display: flex; align-items: center; }
.search {
  width: 275px; height: 40px; margin: 0 5px 0 17px; padding: 0 9px 0 14px;
  display: flex; align-items: center; gap: 11px;
  border: 1px solid #4c5b57; border-radius: 20px; background: #384a46; color: #d5dbd9; font-size: 16.5px;
}
.clapper { margin-left: auto; }
.app { width: 50px; height: 50px; margin-right: 5px; display: grid; place-items: center; position: relative; border-radius: 6px; }
.app svg { width: 30px; height: 30px; }
.app.active { background: #293f3a; border: 1px solid #30463f; }
.app.active::after, .app.open::after { content: ""; position: absolute; bottom: 1px; left: 14px; width: 20px; height: 4px; border-radius: 2px; background: #4cc2ff; }
.app.open::after { left: 21px; width: 8px; background: #93a09d; }
.cc { width: 30px; height: 30px; background: #6b4e3c; border: 2px solid #c9b3a4; font-size: 16px; font-weight: 800; line-height: 25px; text-align: center; color: #fff; }
.profile { position: absolute; top: 4px; right: 4px; width: 20px; height: 20px; border-radius: 10px; background: #04897b; color: #d9eeeb; font-style: normal; font-size: 12px; line-height: 20px; text-align: center; }
.tray { margin-left: auto; display: flex; align-items: center; padding-right: 25px; font-size: 14.4px; line-height: 20px; }
.lang { width: 40px; margin-left: 22px; text-align: center; font-size: 15px; }
.wifi { margin-left: 17px; }
.volume { margin-left: 9px; }
.battery { margin-left: 10px; }
.clock { width: 90px; margin-left: 9px; text-align: right; white-space: nowrap; font-size: 15px; }
.bell { margin-left: 10px; }
```
